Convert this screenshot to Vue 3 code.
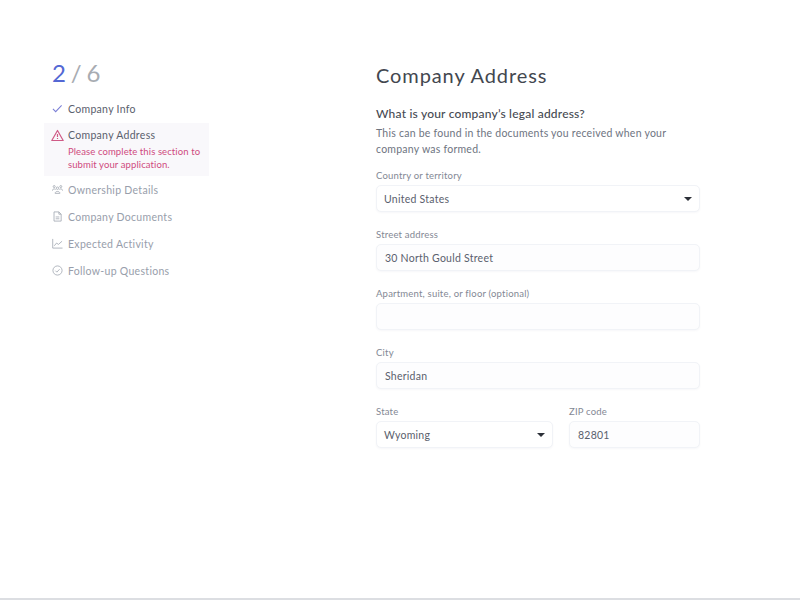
<script setup>
const steps = [
  { label: 'Ownership Details', icon: 'people' },
  { label: 'Company Documents', icon: 'doc' },
  { label: 'Expected Activity', icon: 'chart' },
  { label: 'Follow-up Questions', icon: 'circle' }
]
</script>

<template>
  <div class="page">
    <aside class="sidebar">
      <div class="counter"><span class="cur">2</span><span class="rest"> / 6</span></div>
      <div class="step done">
        <svg class="ico" viewBox="0 0 12 12" fill="none" stroke="#7b7fd6" stroke-width="1.1"><path d="M1 6.5 4 9.5 10.5 2.5" /></svg>
        <span>Company Info</span>
      </div>
      <div class="current">
        <div class="current-title">
          <svg class="warn" viewBox="0 0 13 13" fill="none" stroke="#cf5a86" stroke-width="1.2"><path d="M6.5 1.5 12.2 11.5H.8Z" stroke-linejoin="round" /><path d="M6.5 5V8M6.5 9V10" /></svg>
          <span>Company Address</span>
        </div>
        <p class="err">Please complete this section to<br />submit your application.</p>
      </div>
      <div v-for="s in steps" :key="s.label" class="step todo">
        <svg class="ico" viewBox="0 0 12 12" fill="none" stroke="#a3a9b3" stroke-width="0.9">
          <template v-if="s.icon === 'people'">
            <circle cx="6" cy="4.6" r="1.3" /><circle cx="2.4" cy="2.8" r="1.1" /><circle cx="9.6" cy="2.8" r="1.1" />
            <path d="M3.4 10.2C3.4 7.4 8.6 7.4 8.6 10.2ZM.5 7.2C.5 5 3.2 5 4 6M11.5 7.2C11.5 5 8.8 5 8 6" />
          </template>
          <template v-else-if="s.icon === 'doc'">
            <path d="M2.2 1H7.5L10 3.5V11H2.2ZM7.5 1V3.5H10M4 6.5H8M4 8.5H8" />
          </template>
          <template v-else-if="s.icon === 'chart'">
            <path d="M.8 1V11H11.5M2.5 8.5 5 5.5 7 7 11 3.5" />
          </template>
          <template v-else>
            <circle cx="6" cy="6" r="5" /><path d="M3.7 6.2 5.3 7.8 8.3 4.6" />
          </template>
        </svg>
        <span>{{ s.label }}</span>
      </div>
    </aside>

    <main class="main">
      <h1>Company Address</h1>
      <h2>What is your company’s legal address?</h2>
      <p class="desc">This can be found in the documents you received when your company was formed.</p>

      <label class="field">
        <span class="lbl">Country or territory</span>
        <div class="box select">United States<i class="caret"></i></div>
      </label>
      <label class="field">
        <span class="lbl">Street address</span>
        <div class="box">30 North Gould Street</div>
      </label>
      <label class="field">
        <span class="lbl">Apartment, suite, or floor (optional)</span>
        <div class="box"></div>
      </label>
      <label class="field">
        <span class="lbl">City</span>
        <div class="box">Sheridan</div>
      </label>
      <div class="row">
        <label class="field state">
          <span class="lbl">State</span>
          <div class="box select">Wyoming<i class="caret"></i></div>
        </label>
        <label class="field zip">
          <span class="lbl">ZIP code</span>
          <div class="box">82801</div>
        </label>
      </div>
    </main>
  </div>
</template>

<style>
html, body { margin: 0; background: #fff; }
</style>

<style scoped>
.page {
  box-sizing: border-box;
  width: 800px;
  height: 600px;
  display: flex;
  background: #fff;
  border-bottom: 2px solid #dcdee2;
  font-family: Lato, "Open Sans", sans-serif;
  overflow: hidden;
}
.sidebar { width: 376px; box-sizing: border-box; padding: 58px 0 0 44px; flex: none; }
.counter { font-size: 24px; line-height: 30px; padding-left: 8px; margin-bottom: 7px; letter-spacing: 0.6px; word-spacing: -2.5px; }
.cur { color: #5468d4; }
.rest { color: #a8acb2; }
.step {
  display: flex;
  align-items: center;
  gap: 5px;
  height: 27px;
  padding-left: 8px;
  font-size: 10.5px;
  letter-spacing: 0.3px;
}
.ico { width: 11px; height: 11px; flex: none; }
.warn { width: 13px; height: 13px; flex: none; margin-left: -1px; }
.done { color: #5a606d; }
.todo { color: #989eab; }
.current {
  box-sizing: border-box;
  width: 165px;
  height: 53px;
  padding: 5px 0 0 8px;
  background: #f9f8fb;
  margin: 1px 0 0;
  font-size: 10.5px;
  color: #5a606d;
  letter-spacing: 0.3px;
}
.current-title { display: flex; align-items: center; gap: 4px; height: 14px; }
.err {
  margin: 3px 0 0 16px;
  font-size: 9.5px;
  line-height: 13px;
  color: #cf4a7e;
  letter-spacing: 0.1px;
}
.main { width: 324px; padding-top: 63px; flex: none; color: #4f5563; }
h1 {
  margin: 0 0 18px;
  font-size: 20px;
  line-height: 24px;
  font-weight: 400;
  letter-spacing: 0.9px;
  color: #43474f;
}
h2 {
  margin: 0 0 2px;
  font-size: 12px;
  line-height: 18px;
  font-weight: 500;
  letter-spacing: 0.2px;
  color: #464a52;
}
.desc {
  margin: 0 0 12px;
  font-size: 10.5px;
  line-height: 16px;
  letter-spacing: 0.24px;
  color: #6e747f;
}
.field { display: block; margin-bottom: 16px; }
.lbl {
  display: block;
  height: 13px;
  margin-bottom: 3px;
  font-size: 9.5px;
  line-height: 13px;
  letter-spacing: 0.2px;
  color: #838894;
}
.box {
  box-sizing: border-box;
  height: 27px;
  display: flex;
  align-items: center;
  position: relative;
  padding: 0 8px;
  border: 1px solid #f1f3f7;
  border-radius: 5px;
  background: #fdfdfe;
  box-shadow: 0 1px 2px rgba(90, 100, 130, 0.05);
  font-size: 10.5px;
  letter-spacing: 0.25px;
  color: #5a606d;
}
.select { background: #fff; padding-left: 7px; }
.caret {
  position: absolute;
  right: 7px;
  top: 11px;
  width: 0;
  height: 0;
  border-left: 4px solid transparent;
  border-right: 4px solid transparent;
  border-top: 4px solid #2c3038;
}
.row { display: flex; gap: 16px; }
.state { width: 177px; margin-bottom: 0; }
.zip { width: 131px; margin-bottom: 0; }
</style>
